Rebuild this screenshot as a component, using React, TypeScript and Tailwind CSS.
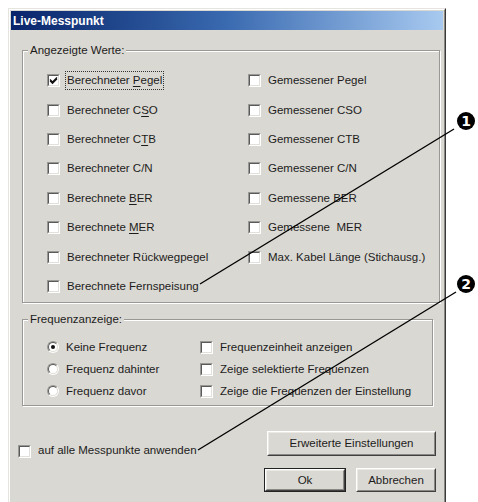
import React from "react";

const font = { fontFamily: '"Liberation Sans", Arial, sans-serif' };

// "&" marks the underlined mnemonic letter
function Label({ text }: { text: string }) {
    const i = text.indexOf("&");
    if (i < 0) return <span className="whitespace-pre">{text}</span>;
    return (
        <span className="whitespace-pre">
            {text.slice(0, i)}
            <span className="underline underline-offset-2">{text[i + 1]}</span>
            {text.slice(i + 2)}
        </span>
    );
}

function Box({ checked }: { checked?: boolean }) {
    return (
        <div className="w-[13px] h-[13px] shrink-0 border border-t-[#9a9894] border-l-[#9a9894] border-r-white border-b-white">
            <div className="w-full h-full bg-white border border-t-[#5a5a5a] border-l-[#5a5a5a] border-r-[#e2e0da] border-b-[#e2e0da] flex items-center justify-center">
                {checked && (
                    <svg width="9" height="9" viewBox="0 0 9 9">
                        <path d="M1 3.5 L3.5 6 L8 1.5 M1 4.8 L3.5 7.3 L8 2.8" stroke="#111" strokeWidth="1.2" fill="none" />
                    </svg>
                )}
            </div>
        </div>
    );
}

function Radio({ checked }: { checked?: boolean }) {
    return (
        <div className="w-[12px] h-[12px] shrink-0 rounded-full border border-t-[#9a9894] border-l-[#9a9894] border-r-white border-b-white">
            <div className="w-full h-full rounded-full bg-white border border-t-[#5a5a5a] border-l-[#5a5a5a] border-r-[#e2e0da] border-b-[#e2e0da] flex items-center justify-center">
                {checked && <div className="w-[4px] h-[4px] rounded-full bg-[#111]" />}
            </div>
        </div>
    );
}

function Check({ text, checked, focus }: { text: string; checked?: boolean; focus?: boolean }) {
    return (
        <div className="flex items-center gap-[6px]">
            <Box checked={checked} />
            <span className={focus ? "outline-1 outline-dotted outline-[#333] outline-offset-0 px-[1px]" : "px-[1px]"}>
                <Label text={text} />
            </span>
        </div>
    );
}

function Button({ text, w, h, def }: { text: string; w: string; h: string; def?: boolean }) {
    return (
        <div className={`${w} ${h} ${def ? "border border-[#222]" : ""}`}>
            <div className="w-full h-full border border-t-white border-l-white border-r-[#404040] border-b-[#404040]">
                <div className="w-full h-full border border-t-[#ece9e4] border-l-[#ece9e4] border-r-[#8a8884] border-b-[#8a8884] flex items-center justify-center">
                    {text}
                </div>
            </div>
        </div>
    );
}

const left = [
    "Berechneter &Pegel",
    "Berechneter C&SO",
    "Berechneter C&TB",
    "Berechneter C/N",
    "Berechnete &BER",
    "Berechnete &MER",
    "Berechneter Rückwegpegel",
    "Berechnete Fernspeisung",
];
const right = [
    "Gemessener Pegel",
    "Gemessener CSO",
    "Gemessener CTB",
    "Gemessener C/N",
    "Gemessene BER",
    "Gemessene  MER",
    "Max. Kabel Länge (Stichausg.)",
];

export default function App() {
    return (
        <div className="relative w-[478px] h-[502px] bg-white overflow-hidden text-[11.5px] text-[#1c1c1c]" style={font}>
            <div className="ml-[8px] mt-[8px] w-[438px] h-[500px] border border-t-[#e6e4de] border-l-[#e6e4de] border-r-[#3a3a3a] border-b-[#3a3a3a]">
                <div className="w-full h-full bg-[#dad8d2] border border-t-white border-l-white border-r-[#8a8884] border-b-[#8a8884]">
                    {/* title bar */}
                    <div className="mx-[1px] mt-[1px] h-[19px] flex items-center pl-[2px] bg-gradient-to-r from-[#0a246a] via-[#3a6ab0] to-[#a8caf0]">
                        <span className="text-white font-bold text-[12px]">Live-Messpunkt</span>
                    </div>

                    {/* Angezeigte Werte */}
                    <fieldset className="ml-[12px] mt-[13px] w-[418px] border border-[#9a9894] shadow-[inset_1px_1px_0_#fff,1px_1px_0_#fff] pt-[9px] pb-[1px]">
                        <legend className="ml-[5px] px-[2px] bg-[#dad8d2] leading-[14px]">Angezeigte Werte:</legend>
                        <div className="pl-[24px] grid grid-cols-[201px_1fr] grid-flow-col grid-rows-[repeat(8,29.43px)] items-center">
                            {left.map((t, i) => (
                                <Check key={t} text={t} checked={i === 0} focus={i === 0} />
                            ))}
                            {right.map((t) => (
                                <Check key={t} text={t} />
                            ))}
                        </div>
                    </fieldset>

                    {/* Frequenzanzeige */}
                    <fieldset className="ml-[12px] mt-[9px] w-[411px] border border-[#9a9894] shadow-[inset_1px_1px_0_#fff,1px_1px_0_#fff] pt-[10px] pb-[3px]">
                        <legend className="ml-[5px] px-[2px] bg-[#dad8d2] leading-[14px]">Frequenzanzeige:</legend>
                        <div className="pl-[24px] grid grid-cols-[153px_1fr] grid-flow-col grid-rows-[repeat(3,22px)] items-center">
                            {["Keine Frequenz", "Frequenz dahinter", "Frequenz davor"].map((t, i) => (
                                <div key={t} className="flex items-center gap-[7px]">
                                    <Radio checked={i === 0} />
                                    <span>{t}</span>
                                </div>
                            ))}
                            {["Frequenzeinheit anzeigen", "Zeige selektierte Frequenzen", "Zeige die Frequenzen der Einstellung"].map((t) => (
                                <Check key={t} text={t} />
                            ))}
                        </div>
                    </fieldset>

                    {/* bottom */}
                    <div className="mt-[25px] flex justify-between pl-[8px] pr-[8px]">
                        <div className="mt-[11px]">
                            <Check text="auf alle Messpunkte anwenden" />
                        </div>
                        <div className="flex flex-col items-end">
                            <Button text="Erweiterte Einstellungen" w="w-[169px]" h="h-[25px]" />
                            <div className="mt-[12px] flex gap-[10px]">
                                <Button text="Ok" w="w-[82px]" h="h-[24px]" def />
                                <Button text="Abbrechen" w="w-[80px]" h="h-[24px]" />
                            </div>
                        </div>
                    </div>
                </div>
            </div>

            {/* callouts */}
            <svg className="absolute inset-0 pointer-events-none" width="478" height="502" viewBox="0 0 478 502">
                <line x1="200" y1="284" x2="454" y2="129" stroke="#000" strokeWidth="1.4" />
                <line x1="198" y1="450" x2="456" y2="292" stroke="#000" strokeWidth="1.4" />
                <circle cx="466" cy="121" r="9" fill="#000" />
                <text x="466" y="126" fill="#fff" fontSize="14" fontWeight="bold" textAnchor="middle" fontFamily="DejaVu Sans, sans-serif">1</text>
                <circle cx="466" cy="284" r="9" fill="#000" />
                <text x="466" y="289" fill="#fff" fontSize="14" fontWeight="bold" textAnchor="middle" fontFamily="DejaVu Sans, sans-serif">2</text>
            </svg>
        </div>
    );
}
